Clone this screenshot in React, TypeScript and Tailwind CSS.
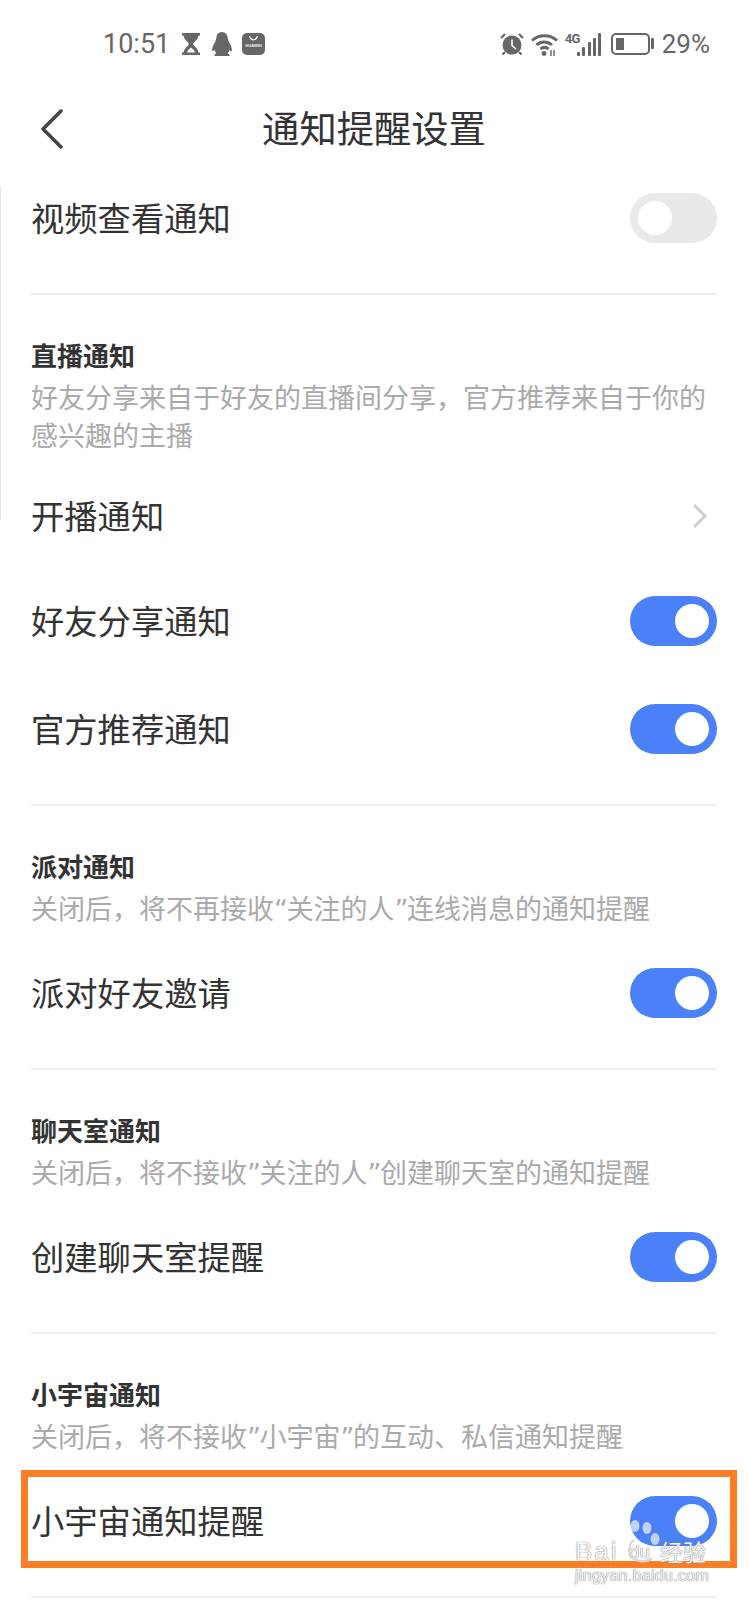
const Toggle = ({ on = true }: { on?: boolean }) => {
  return (
    <div
      className={`flex h-[50px] w-[87px] items-center rounded-full px-2 ${
        on ? 'justify-end bg-[#4a80f8]' : 'justify-start bg-[#e9e9e9]'
      }`}
    >
      <div className="size-[34px] rounded-full bg-white" />
    </div>
  )
}

const Row = ({ label, on }: { label: string; on?: boolean }) => {
  return (
    <div className="flex h-[108px] items-center justify-between">
      <span className="pt-1 text-[33.300px] text-[#333]">{label}</span>
      <Toggle on={on} />
    </div>
  )
}

// the quote marks in the picture are wider than Roboto's
const Q = ({ children }: { children: React.ReactNode }) => {
  return <span className="font-['DejaVu_Sans',sans-serif] tracking-[-1.500px]">{children}</span>
}

const Section = ({
  title,
  desc,
  children,
}: {
  title: string
  desc: React.ReactNode
  children: React.ReactNode
}) => {
  return (
    <section className="border-t-2 border-[#eeeeee] pt-[42px] pb-[21px]">
      <h3 className="h-10 text-[26px] leading-10 font-bold text-[#333]">{title}</h3>
      <p className="mt-[3px] text-[27px] leading-[38px] text-[#aaaaaa]">{desc}</p>
      {children}
    </section>
  )
}

const StatusLeft = () => {
  return (
    <div className="flex items-center">
      <span className="w-[79px] text-[27px] leading-none text-[#666]">10:51</span>
      <svg viewBox="0 0 18 22" className="h-[22px] w-[18px]" fill="#666">
        <path d="M0 0h18v2.500h-1.600c0 3.500-4.400 6.300-5.400 8.500 1 2.200 5.400 5 5.400 8.500H18V22H0v-2.500h1.600c0-3.500 4.400-6.300 5.400-8.500-1-2.200-5.400-5-5.400-8.500H0z" />
        <path d="M9 14.500c-2 1.500-3.500 3-4 5h8c-.5-2-2-3.500-4-5z" fill="#fff" />
      </svg>
      <svg viewBox="0 0 20 24" className="ml-3 h-6 w-5" fill="#666">
        <path d="M10 0c3.800 0 5.700 3 5.800 6.800.1 2.200 2.700 5.200 3.800 9 .6 2.200.2 3.500-.5 3.500-.6 0-1.200-.8-1.700-1.700-.2 1.500-.8 2.800-1.800 3.700 1.200.5 2 1.200 2 2.700H2.400c0-1.500.8-2.200 2-2.700-1-.9-1.600-2.200-1.800-3.700-.5.900-1.100 1.700-1.700 1.700-.7 0-1.100-1.300-.5-3.500 1.100-3.800 3.700-6.800 3.800-9C4.300 3 6.200 0 10 0z" />
      </svg>
      <svg viewBox="0 0 23 22" className="ml-2.5 h-[22px] w-[23px]">
        <rect width="23" height="22" rx="5" fill="#666" />
        <path d="M7.500 3c.8 2.600 2.200 3.800 4 3.800s3.200-1.200 4-3.800" fill="none" stroke="#fff" strokeWidth="1.200" />
        <text x="11.500" y="13.500" textAnchor="middle" fontSize="4.200" fontWeight="700" fill="#eee" fontFamily="Liberation Sans">
          HUAWEI
        </text>
      </svg>
    </div>
  )
}

const StatusRight = () => {
  return (
    <div className="flex items-center">
      <svg viewBox="0 0 24 22" className="h-[22px] w-6" fill="#666">
        <circle cx="12" cy="12" r="9.500" />
        <path d="M12 6.500v6l4 3.500" fill="none" stroke="#fff" strokeWidth="1.600" />
        <path d="M1 5l4-4M23 5l-4-4M5 19l-2.500 2.500M19 19l2.500 2.500" fill="none" stroke="#666" strokeWidth="2.200" />
      </svg>
      <svg viewBox="0 0 27 23" className="ml-[7px] h-[23px] w-[27px]" fill="none" stroke="#666" strokeWidth="3">
        <path d="M1 7.500c7-6.500 18-6.500 25 0" />
        <path d="M5.500 12c4.500-4 11-4 15.500 0" />
        <path d="M9.500 16c2.500-2 5.500-2 8 0" />
        <circle cx="13" cy="20.500" r="2.400" fill="#666" stroke="none" />
        <path d="M20 17v6M23 17v6" strokeWidth="1.400" />
      </svg>
      <div className="relative ml-[7px] h-[23px] w-9">
        <span className="absolute top-0 left-0 text-[13px] leading-3 font-bold tracking-tighter text-[#666]">4G</span>
        <svg viewBox="0 0 24 23" className="absolute top-0 right-0 h-[23px] w-6" fill="#666">
          <rect x="0" y="19" width="3" height="4" rx="1" />
          <rect x="5" y="14" width="3" height="9" rx="1" />
          <rect x="11" y="9" width="3" height="14" rx="1" />
          <rect x="16" y="5" width="3" height="18" rx="1" />
          <rect x="21" y="0" width="3" height="23" rx="1" />
        </svg>
      </div>
      <svg viewBox="0 0 43 22" className="ml-2.5 h-[22px] w-[43px]">
        <rect x="1" y="1" width="37" height="20" rx="4" fill="none" stroke="#666" strokeWidth="2" />
        <rect x="5" y="5" width="8" height="12" fill="#666" />
        <rect x="40" y="5" width="3" height="11" rx="1" fill="#666" />
      </svg>
      <span className="ml-2 text-[26px] leading-none text-[#666]">29%</span>
    </div>
  )
}

const Watermark = () => {
  return (
    <div className="absolute top-[1520px] left-[575px] w-[135px] text-[#f4f4f4] [text-shadow:0_0_1px_#777,0_0_1px_#999]">
      <svg viewBox="0 0 34 44" className="absolute top-0 left-[52px] h-11 w-[34px]" fill="#fff" fillOpacity="0.65">
        <ellipse cx="8" cy="6" rx="4.500" ry="6" />
        <ellipse cx="20" cy="8" rx="4.500" ry="6" />
        <ellipse cx="28" cy="19" rx="4.500" ry="6" />
        <path d="M7 20C1 24 0 35 7 39c5 3 14 3 18-1" fill="none" stroke="#d8d8d8" strokeWidth="2.500" />
      </svg>
      <div className="mt-5 flex h-[22px] items-center font-['Liberation_Sans',sans-serif] leading-none">
        <span className="w-[54px] text-[26px] tracking-[2px]">Bai</span>
        <span className="w-[31px] text-[19px]">du</span>
        <span className="font-['Noto_Sans_CJK_SC',sans-serif] text-[23px]">经验</span>
      </div>
      <div className="mt-1.5 font-['Liberation_Sans',sans-serif] text-base leading-4 tracking-[0.3px]">
        jingyan.baidu.com
      </div>
    </div>
  )
}

const App = () => {
  return (
    <div className="relative h-[1600px] overflow-hidden bg-white font-['Roboto','Noto_Sans_CJK_SC',sans-serif]">
      <div className="flex h-[88px] items-center justify-between pr-[38px] pl-[103px]">
        <StatusLeft />
        <StatusRight />
      </div>

      <header className="relative flex h-[76px] items-center justify-center pt-2.5">
        <svg viewBox="0 0 22 40" className="absolute top-[21px] left-[41px] h-10 w-[22px]" fill="none" stroke="#444" strokeWidth="3.500" strokeLinecap="round" strokeLinejoin="round">
          <path d="M20 2L2 20l18 18" />
        </svg>
        <h1 className="text-[37.300px] leading-none text-[#333]">通知提醒设置</h1>
      </header>

      <div className="px-[31px]">
        <div className="pb-[21px]">
          <Row label="视频查看通知" on={false} />
        </div>

        <Section title="直播通知" desc="好友分享来自于好友的直播间分享，官方推荐来自于你的感兴趣的主播">
          <div className="mt-2 flex h-[103px] items-center justify-between">
            <span className="pt-1 text-[33.300px] text-[#333]">开播通知</span>
            <svg viewBox="0 0 16 24" className="mr-[9px] h-6 w-4" fill="none" stroke="#cfcfcf" strokeWidth="3">
              <path d="M2 1l11 11L2 23" />
            </svg>
          </div>
          <Row label="好友分享通知" />
          <Row label="官方推荐通知" />
        </Section>

        <Section title="派对通知" desc={<>关闭后，将不再接收<Q>“</Q>关注的人<Q>”</Q>连线消息的通知提醒</>}>
          <div className="mt-2.5">
            <Row label="派对好友邀请" />
          </div>
        </Section>

        <Section title="聊天室通知" desc={<>关闭后，将不接收<Q>”</Q>关注的人<Q>”</Q>创建聊天室的通知提醒</>}>
          <div className="mt-2.5">
            <Row label="创建聊天室提醒" />
          </div>
        </Section>

        <Section title="小宇宙通知" desc={<>关闭后，将不接收<Q>”</Q>小宇宙<Q>”</Q>的互动、私信通知提醒</>}>
          <div className="mt-2.5">
            <Row label="小宇宙通知提醒" />
          </div>
        </Section>

        <div className="border-t-2 border-[#eeeeee]" />
      </div>

      {/* scroll mark on the left edge */}
      <div className="absolute top-[186px] left-0 h-[334px] w-px bg-[#e6e6e6]" />
      {/* annotation box drawn over the screenshot */}
      <div className="absolute top-[1470px] left-[21px] h-[98px] w-[716px] border-[7px] border-[#fb7d26]" />
      <Watermark />
    </div>
  )
}

export default App
